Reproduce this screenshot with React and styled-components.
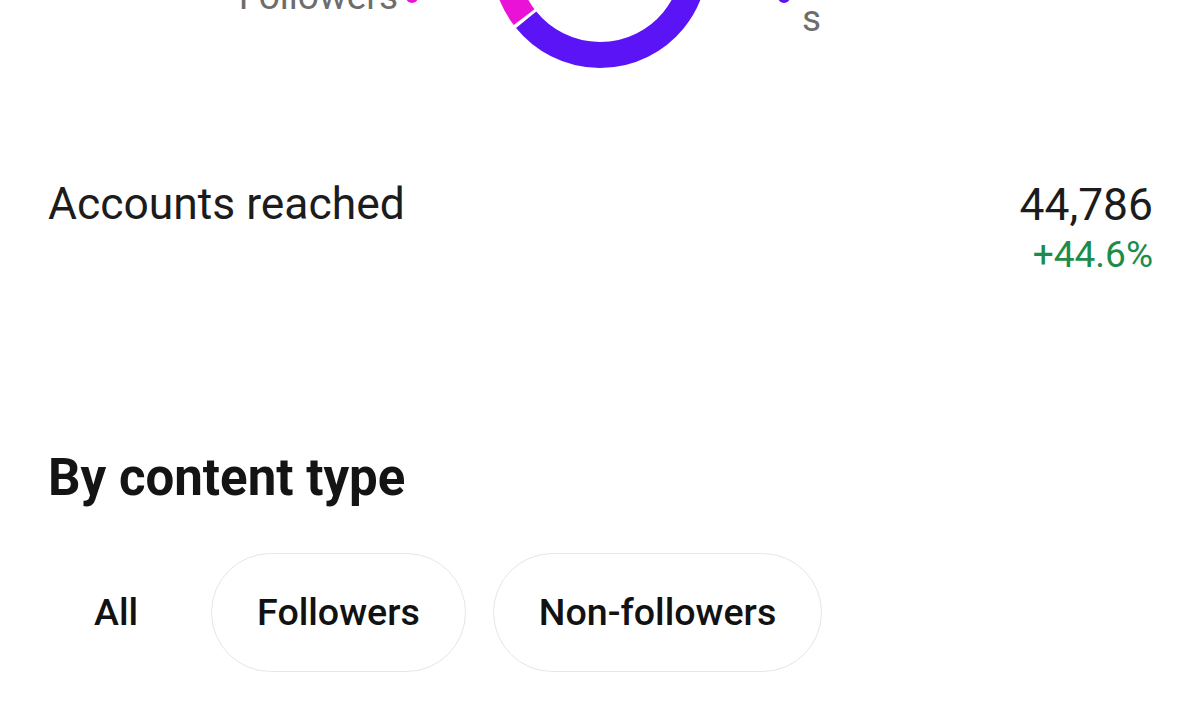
import styled, { createGlobalStyle } from "styled-components";

const GlobalStyle = createGlobalStyle`
  html, body {
    margin: 0;
    padding: 0;
    background: #ffffff;
  }
  body {
    font-family: Roboto, "Noto Sans", "Liberation Sans", sans-serif;
    color: #1c1c1c;
    overflow: hidden;
  }
`;

const Page = styled.main`
  width: 1200px;
  box-sizing: border-box;
  padding: 0 48px;
  margin-top: -160px;
`;

const ChartRow = styled.section`
  height: 240px;
  display: grid;
  grid-template-columns: 1fr auto 1fr;
  align-items: center;
`;

const LegendItem = styled.div`
  display: flex;
  align-items: center;
  gap: ${({ $side }) => ($side === "left" ? "8px" : "12px")};
  margin-top: 74px;
  justify-self: ${({ $side }) => ($side === "left" ? "end" : "start")};
  margin-right: ${({ $side }) => ($side === "left" ? "62px" : "0")};
  margin-left: ${({ $side }) => ($side === "right" ? "58px" : "0")};
`;

const LegendLabel = styled.span`
  font-size: 37px;
  line-height: 44px;
  color: #6d6d6d;
  width: ${({ $width }) => ($width ? `${$width}px` : "auto")};
  word-break: ${({ $width }) => ($width ? "break-all" : "normal")};
`;

const Dot = styled.span`
  width: 12px;
  height: 12px;
  border-radius: 50%;
  flex: none;
  background: ${({ $color }) => $color};
`;

const MetricRow = styled.section`
  margin-top: 98px;
  display: flex;
  justify-content: space-between;
  align-items: flex-start;
`;

const MetricLabel = styled.span`
  font-size: 44.4px;
  line-height: 52px;
  color: #1c1c1c;
`;

const MetricValue = styled.div`
  padding-top: 1px;
  display: flex;
  flex-direction: column;
  align-items: flex-end;
  margin-right: -1px;
`;

const ValueText = styled.span`
  font-size: 44.4px;
  line-height: 52px;
  color: #1c1c1c;
`;

const Change = styled.span`
  margin-top: 2px;
  font-size: 37px;
  line-height: 44px;
  color: #1d8c4b;
`;

const SectionTitle = styled.h2`
  margin: 173px 0 0;
  font-size: 51px;
  line-height: 56px;
  font-weight: 700;
  color: #141414;
`;

const ChipRow = styled.div`
  margin-top: 47px;
  display: flex;
  gap: 27px;
`;

const Chip = styled.button`
  height: 119px;
  padding: 0 45px;
  box-sizing: border-box;
  border-radius: 60px;
  border: 1px solid ${({ $active }) => ($active ? "transparent" : "#e6e6e6")};
  background: #ffffff;
  font-family: inherit;
  font-size: 37.6px;
  font-weight: 500;
  line-height: 43px;
  color: #121212;
  display: inline-flex;
  align-items: center;
  cursor: pointer;
`;

const PINK = "#e912d6";
const PURPLE = "#5a14f6";

function arcPath(cx, cy, r, start, end) {
  const rad = (a) => (a * Math.PI) / 180;
  const x1 = cx + r * Math.cos(rad(start));
  const y1 = cy + r * Math.sin(rad(start));
  const x2 = cx + r * Math.cos(rad(end));
  const y2 = cy + r * Math.sin(rad(end));
  const large = end - start > 180 ? 1 : 0;
  return `M ${x1} ${y1} A ${r} ${r} 0 ${large} 1 ${x2} ${y2}`;
}

function Donut() {
  const segments = [
    { color: PURPLE, start: -62, end: 141 },
    { color: PINK, start: 143, end: 296 },
  ];
  return (
    <svg width="240" height="240" viewBox="0 0 240 240">
      {segments.map((s) => (
        <path
          key={s.color}
          d={arcPath(120, 120, 95, s.start, s.end)}
          fill="none"
          stroke={s.color}
          strokeWidth="26"
        />
      ))}
    </svg>
  );
}

export default function App() {
  const chips = [
    { label: "All", active: true },
    { label: "Followers" },
    { label: "Non-followers" },
  ];

  return (
    <>
      <GlobalStyle />
      <Page>
        <ChartRow>
          <LegendItem $side="left">
            <LegendLabel>Followers</LegendLabel>
            <Dot $color={PINK} />
          </LegendItem>
          <Donut />
          <LegendItem $side="right">
            <Dot $color={PURPLE} />
            <LegendLabel $width={220}>Non-followers</LegendLabel>
          </LegendItem>
        </ChartRow>

        <MetricRow>
          <MetricLabel>Accounts reached</MetricLabel>
          <MetricValue>
            <ValueText>44,786</ValueText>
            <Change>+44.6%</Change>
          </MetricValue>
        </MetricRow>

        <SectionTitle>By content type</SectionTitle>

        <ChipRow>
          {chips.map((c) => (
            <Chip key={c.label} $active={c.active}>
              {c.label}
            </Chip>
          ))}
        </ChipRow>
      </Page>
    </>
  );
}
